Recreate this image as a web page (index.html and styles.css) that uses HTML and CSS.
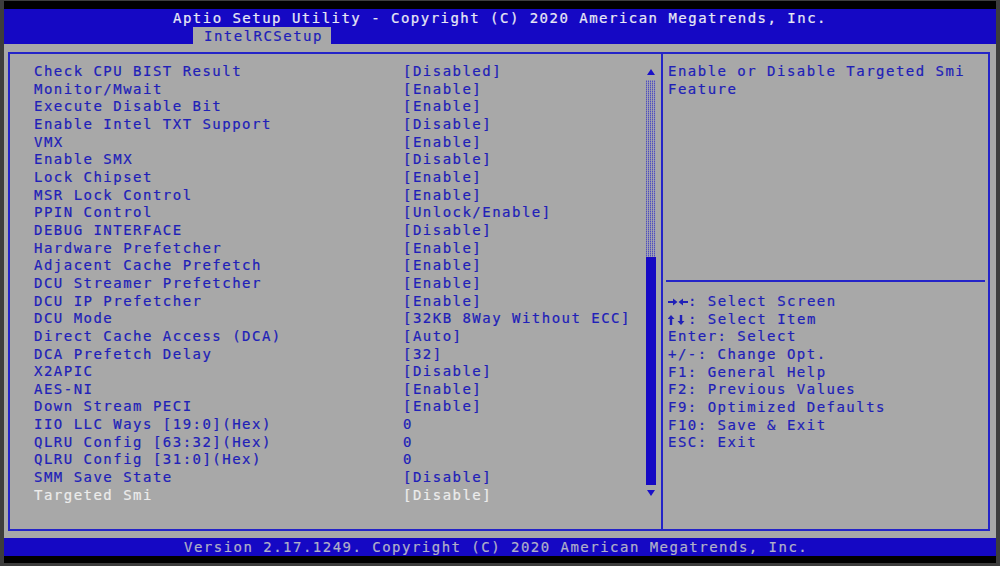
FILE: index.html
```html
<!DOCTYPE html>
<html>
<head>
<meta charset="utf-8">
<link rel="stylesheet" href="styles.css">
</head>
<body>
<div class="screen">
  <div class="strip-top"></div>
  <div class="header">
    <div class="title">Aptio Setup Utility - Copyright (C) 2020 American Megatrends, Inc.</div>
    <div class="tabs"><div class="tab">IntelRCSetup</div></div>
  </div>
  <div class="main">
    <div class="panel">
      <div class="left">
        <div class="list">
          <div class="row"><span>Check CPU BIST Result</span><span>[Disabled]</span></div>
          <div class="row"><span>Monitor/Mwait</span><span>[Enable]</span></div>
          <div class="row"><span>Execute Disable Bit</span><span>[Enable]</span></div>
          <div class="row"><span>Enable Intel TXT Support</span><span>[Disable]</span></div>
          <div class="row"><span>VMX</span><span>[Enable]</span></div>
          <div class="row"><span>Enable SMX</span><span>[Disable]</span></div>
          <div class="row"><span>Lock Chipset</span><span>[Enable]</span></div>
          <div class="row"><span>MSR Lock Control</span><span>[Enable]</span></div>
          <div class="row"><span>PPIN Control</span><span>[Unlock/Enable]</span></div>
          <div class="row"><span>DEBUG INTERFACE</span><span>[Disable]</span></div>
          <div class="row"><span>Hardware Prefetcher</span><span>[Enable]</span></div>
          <div class="row"><span>Adjacent Cache Prefetch</span><span>[Enable]</span></div>
          <div class="row"><span>DCU Streamer Prefetcher</span><span>[Enable]</span></div>
          <div class="row"><span>DCU IP Prefetcher</span><span>[Enable]</span></div>
          <div class="row"><span>DCU Mode</span><span>[32KB 8Way Without ECC]</span></div>
          <div class="row"><span>Direct Cache Access (DCA)</span><span>[Auto]</span></div>
          <div class="row"><span>DCA Prefetch Delay</span><span>[32]</span></div>
          <div class="row"><span>X2APIC</span><span>[Disable]</span></div>
          <div class="row"><span>AES-NI</span><span>[Enable]</span></div>
          <div class="row"><span>Down Stream PECI</span><span>[Enable]</span></div>
          <div class="row"><span>IIO LLC Ways [19:0](Hex)</span><span>0</span></div>
          <div class="row"><span>QLRU Config [63:32](Hex)</span><span>0</span></div>
          <div class="row"><span>QLRU Config [31:0](Hex)</span><span>0</span></div>
          <div class="row"><span>SMM Save State</span><span>[Disable]</span></div>
          <div class="row selected"><span>Targeted Smi</span><span>[Disable]</span></div>
        </div>
        <div class="scrollbar">
          <div class="arrow up"></div>
          <div class="track"></div>
          <div class="thumb"></div>
          <div class="arrow down"></div>
        </div>
      </div>
      <div class="right">
        <div class="help">Enable or Disable Targeted Smi
Feature</div>
        <div class="keys">
          <div class="key"><svg class="arr" width="20" height="10" viewBox="0 0 20 10"><path d="M0 4h5V1.5L9.5 5 5 8.5V6H0z M20 4h-5V1.5L10.5 5 15 8.5V6h5z" fill="#2020b8"/></svg>: Select Screen</div>
          <div class="key"><svg class="arr" width="20" height="10" viewBox="0 0 20 10"><path d="M3 0L6.5 4H4.2V10H1.8V4H-0.5z M13 10L16.5 6H14.2V0H11.8V6H9.5z" fill="#2020b8"/></svg>: Select Item</div>
          <div class="key">Enter: Select</div>
          <div class="key">+/-: Change Opt.</div>
          <div class="key">F1: General Help</div>
          <div class="key">F2: Previous Values</div>
          <div class="key">F9: Optimized Defaults</div>
          <div class="key">F10: Save &amp; Exit</div>
          <div class="key">ESC: Exit</div>
        </div>
      </div>
    </div>
  </div>
  <div class="footer">Version 2.17.1249. Copyright (C) 2020 American Megatrends, Inc.</div>
  <div class="strip-bottom"></div>
</div>
</body>
</html>
```

FILE: styles.css
```css
* { box-sizing: border-box; }
html, body {
  margin: 0;
  padding: 0;
  background: #3d3d3d;
  width: 1000px;
  height: 566px;
  overflow: hidden;
}
body {
  font-family: "DejaVu Sans Mono", "Liberation Mono", monospace;
  font-size: 14px;
  letter-spacing: 1.48px;
  -webkit-text-stroke: 0.2px currentColor;
}
.screen {
  margin: 1px 4px 3px 4px;
  height: 562px;
  display: flex;
  flex-direction: column;
  background: #a8a8a8;
}
.strip-top { height: 8px; background: #000; flex: none; }
.strip-bottom { height: 7px; background: #000; flex: none; }
.header {
  background: #1508c4;
  height: 35px;
  flex: none;
  display: flex;
  flex-direction: column;
}
.title {
  height: 18px;
  line-height: 18px;
  color: #e8e8f4;
  padding-left: 169px;
  white-space: pre;
}
.tabs {
  height: 17px;
  display: flex;
  padding-left: 189px;
}
.tab {
  background: #a8a8a8;
  color: #1e1eb8;
  width: 138px;
  height: 17px;
  line-height: 18px;
  padding-left: 11px;
  white-space: pre;
}
.main {
  flex: 1;
  min-height: 0;
  padding: 8px 6px 7px 4px;
  display: flex;
}
.panel {
  flex: 1;
  border: 2px solid #2424c8;
  display: flex;
}
.left {
  width: 653px;
  border-right: 2px solid #2424c8;
  display: flex;
  flex: none;
}
.list {
  flex: 1;
  padding: 9px 0 0 24px;
  color: #2020b8;
}
.row {
  display: grid;
  grid-template-columns: 369px 1fr;
  height: 17.67px;
  line-height: 17.67px;
  white-space: pre;
}
.row.selected { color: #ececec; }
.scrollbar {
  width: 10px;
  margin-right: 5px;
  padding-top: 15px;
  display: flex;
  flex-direction: column;
  align-items: center;
}
.arrow {
  width: 0;
  height: 0;
  border-left: 4px solid transparent;
  border-right: 4px solid transparent;
}
.arrow.up { border-bottom: 6px solid #1a10c8; margin-bottom: 5px; }
.arrow.down { border-top: 6px solid #1a10c8; margin-top: 5px; }
.track {
  width: 10px;
  height: 177px;
  background:
    repeating-linear-gradient(0deg, rgba(168,168,168,0.55) 0 1px, transparent 1px 2px),
    repeating-linear-gradient(90deg, #5050bc 0 1px, #a0a0b8 1px 2px);
}
.thumb {
  width: 10px;
  height: 228px;
  background: #1508c4;
}
.right {
  flex: 1;
  padding: 0 3px 0 5px;
  display: flex;
  flex-direction: column;
  color: #2020b8;
}
.help {
  height: 228px;
  padding-top: 9px;
  line-height: 17.67px;
  white-space: pre;
  border-bottom: 2px solid #2424c8;
  margin-left: -2px;
  padding-left: 2px;
}
.keys {
  padding-top: 11px;
}
.key {
  height: 17.67px;
  line-height: 17.67px;
  white-space: pre;
}
.arr { vertical-align: -1px; }
.footer {
  background: #1508c4;
  height: 18px;
  line-height: 18px;
  flex: none;
  color: #b0b0c8;
  padding-left: 180px;
  white-space: pre;
}
```
